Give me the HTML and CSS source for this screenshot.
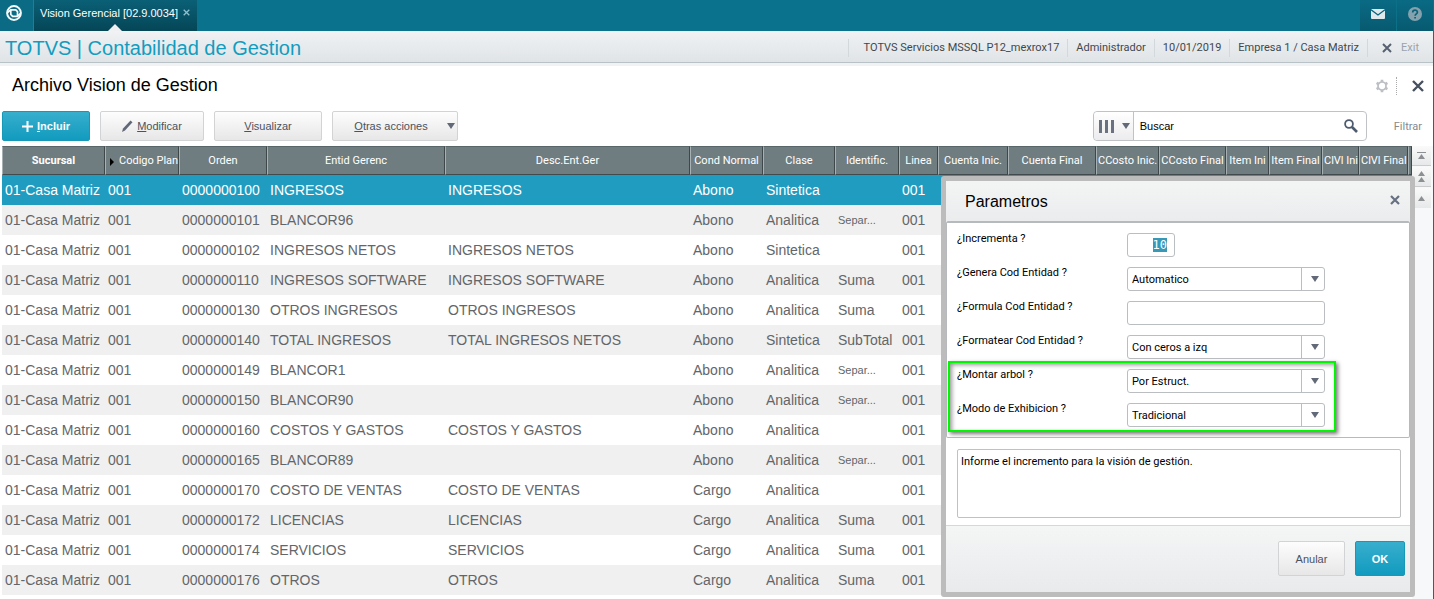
FILE: index.html
```html
<!DOCTYPE html>
<html lang="es">
<head>
<meta charset="utf-8">
<title>TOTVS | Contabilidad de Gestion</title>
<link rel="stylesheet" href="styles.css">
</head>
<body>
<header class="topbar">
  <a class="brand" href="#" aria-label="TOTVS">
    <svg width="16" height="16" viewBox="0 0 16 16"><circle cx="8" cy="8" r="6.900" fill="none" stroke="#f4fafb" stroke-width="2"/><path d="M4.800 4.800h5l1.700 1.800v4.700H6.600L4.800 9.400z" fill="none" stroke="#f4fafb" stroke-width="1.700" stroke-linejoin="round"/><path d="M1.500 7.500l3.300-2.600M11.400 11.200l3.200-2.700" stroke="#f4fafb" stroke-width="1.800"/></svg>
  </a>
  <div class="tab"><span>Vision Gerencial [02.9.0034]</span><button class="plain" aria-label="Cerrar pestaña"><svg width="7" height="7" viewBox="0 0 7 7"><path d="M.7.700l5.600 5.600M6.300.700L.7 6.300" stroke="#8fc0cd" stroke-width="1.300"/></svg></button></div>
  <nav class="top-actions">
    <button class="plain" aria-label="Mensajes"><svg width="14" height="10" viewBox="0 0 14 10"><rect width="14" height="10" rx="1" fill="#dfe9ec"/><path d="M0 .800l7 5.200 7-5.200" fill="none" stroke="#07617a" stroke-width="1.300"/></svg></button>
    <button class="plain" aria-label="Ayuda"><svg width="14" height="14" viewBox="0 0 14 14"><circle cx="7" cy="7" r="7" fill="#84a2ad"/><path d="M4.700 5.400c0-3 4.700-3 4.700-.2 0 1.700-2.300 1.600-2.300 3.600M7.100 9.900v1.700" fill="none" stroke="#0a6178" stroke-width="1.700"/></svg></button>
  </nav>
</header>
<div class="frame">
  <div class="module-bar">
    <h1>TOTVS | Contabilidad de Gestion</h1>
    <ul class="session">
      <li>TOTVS Servicios MSSQL P12_mexrox17</li><li>Administrador</li><li>10/01/2019</li><li>Empresa 1 / Casa Matriz</li>
      <li><button class="plain exit"><svg width="10" height="10" viewBox="0 0 10 10"><path d="M1 1l8 8M9 1L1 9" stroke="#566070" stroke-width="2"/></svg>Exit</button></li>
    </ul>
  </div>
  <div class="title-row">
    <h2>Archivo Vision de Gestion</h2>
    <button class="plain gear" aria-label="Configurar"><svg width="14" height="14" viewBox="0 0 14 14"><circle cx="7" cy="7" r="4" fill="none" stroke="#bcbfc3" stroke-width="1.700"/><path d="M7 .800v2.400M7 10.800v2.400M1.600 3.900l2.100 1.200M10.300 8.900l2.100 1.200M1.600 10.100l2.100-1.200M10.300 5.100l2.100-1.200" stroke="#bcbfc3" stroke-width="2.600"/></svg></button>
    <button class="plain close" aria-label="Cerrar"><svg width="12" height="12" viewBox="0 0 12 12"><path d="M1 1l10 10M11 1L1 11" stroke="#47505f" stroke-width="2.400"/></svg></button>
  </div>
  <div class="toolbar">
    <button class="btn primary add"><svg width="11" height="11" viewBox="0 0 11 11"><path d="M5.500 0v11M0 5.500h11" stroke="#fff" stroke-width="2"/></svg><span><u>I</u>ncluir</span></button>
    <button class="btn edit"><svg width="11" height="12" viewBox="0 0 11 12"><path d="M0 12l1-3.500L8.500.500l2 1.700L3 10.500z" fill="#606878"/></svg><span><u>M</u>odificar</span></button>
    <button class="btn view"><span><u>V</u>isualizar</span></button>
    <button class="btn more"><span><u>O</u>tras acciones</span><i class="down"></i></button>
    <div class="search">
      <button class="pick" aria-label="Elegir columna"><svg width="15" height="13" viewBox="0 0 15 13"><path d="M0 0h3v13H0zM6 0h3v13H6zM12 0h3v13h-3z" fill="#6a7180"/></svg><i class="down"></i></button>
      <input type="text" value="Buscar" aria-label="Buscar">
      <button class="plain" aria-label="Ejecutar busqueda"><svg width="14" height="14" viewBox="0 0 14 14"><circle cx="5" cy="5" r="3.900" fill="none" stroke="#4e5a6d" stroke-width="1.800"/><path d="M8 8l5 5" stroke="#4e5a6d" stroke-width="2.600"/></svg></button>
    </div>
    <a class="filter" href="#">Filtrar</a>
  </div>
  <main class="browse">
    <table class="grid">
      <colgroup><col class="w103"><col class="w74"><col class="w88"><col class="w178"><col class="w245"><col class="w73"><col class="w72"><col class="w64"><col class="w39"><col class="w70"><col class="w88"><col class="w63"><col class="w67"><col class="w43"><col class="w53"><col class="w37"><col class="w49"><col></colgroup>
      <thead><tr><th class="sorted">Sucursal</th><th class="marked"><span class="mark"></span>Codigo Plan</th><th>Orden</th><th>Entid Gerenc</th><th>Desc.Ent.Ger</th><th>Cond Normal</th><th>Clase</th><th>Identific.</th><th>Linea</th><th>Cuenta Inic.</th><th>Cuenta Final</th><th>CCosto Inic.</th><th>CCosto Final</th><th>Item Ini</th><th>Item Final</th><th>ClVl Ini</th><th>ClVl Final</th><th></th></tr></thead>
      <tbody id="rows"></tbody>
    </table>
    <div class="scroller">
      <button aria-label="Inicio"><svg width="9" height="8" viewBox="0 0 9 8"><path d="M0 0h9v1H0zM4.500 2L8 7H1z" fill="#8d9093"/></svg></button>
      <button aria-label="Pagina anterior"><svg width="9" height="11" viewBox="0 0 9 11"><path d="M4.500 0L8 5H1zM4.500 6L8 11H1z" fill="#8d9093"/></svg></button>
      <button aria-label="Anterior"><svg width="9" height="5" viewBox="0 0 9 5"><path d="M4.500 0L8 5H1z" fill="#8d9093"/></svg></button>
    </div>
    <section class="dialog" role="dialog" aria-labelledby="dlg-title">
      <div class="dialog-head"><h3 id="dlg-title">Parametros</h3><button class="plain" aria-label="Cerrar"><svg width="10" height="10" viewBox="0 0 10 10"><path d="M1 1l8 8M9 1L1 9" stroke="#667080" stroke-width="2.200"/></svg></button></div>
      <form class="params">
        <div class="field"><label for="p1">¿Incrementa ?</label><input class="num" id="p1" type="text" value="10"></div>
        <div class="field"><label for="p2">¿Genera Cod Entidad ?</label><span class="select"><select id="p2"><option>Automatico</option></select></span></div>
        <div class="field"><label for="p3">¿Formula Cod Entidad ?</label><input id="p3" type="text"></div>
        <div class="field"><label for="p4">¿Formatear Cod Entidad ?</label><span class="select"><select id="p4"><option>Con ceros a izq</option></select></span></div>
        <div class="highlight">
          <div class="field"><label for="p5">¿Montar arbol ?</label><span class="select"><select id="p5"><option>Por Estruct.</option></select></span></div>
          <div class="field"><label for="p6">¿Modo de Exhibicion ?</label><span class="select"><select id="p6"><option>Tradicional</option></select></span></div>
        </div>
      </form>
      <div class="hint"><textarea readonly aria-label="Ayuda del parametro">Informe el incremento para la visión de gestión.</textarea></div>
      <div class="dialog-foot"><button class="btn cancel">Anular</button><button class="btn primary ok">OK</button></div>
    </section>
  </main>
</div>
<script src="app.js"></script>
</body>
</html>
```
FILE: styles.css
```css
* { box-sizing: border-box; }
body { margin: 0; height: 100vh; overflow: hidden; display: flex; flex-direction: column; background: #fff; color: #000; font-family: "Liberation Sans", Arial, sans-serif; font-size: 11px; }
h1, h2, h3 { margin: 0; font-weight: normal; }
button, input, select, textarea { font: inherit; }
svg { display: block; flex: none; }
.plain { border: 0; background: none; padding: 0; color: inherit; display: flex; align-items: center; justify-content: center; }

.topbar { flex: none; display: flex; height: 31px; background: #0b728e; color: #fff; }
.brand { width: 34px; display: flex; padding: 5px 0 0 6px; background: #0b6a84; border-right: 1px solid #35778a; }
.tab { position: relative; width: 163px; display: flex; gap: 5px; padding: 6px 0 0 6px; line-height: 14px; background: linear-gradient(#0a6076, #054657); white-space: nowrap; }
.tab .plain { height: 13px; }
.tab::after { content: ""; position: absolute; bottom: 0; left: 74px; border: 7px solid transparent; border-top: 0; border-bottom-color: #eef0f2; }
.top-actions { margin-left: auto; display: flex; background: linear-gradient(#0a6a84, #075a70); }
.top-actions .plain { width: 37px; padding-bottom: 4px; border-right: 1px solid #0c7088; }

.frame { flex: 1; min-height: 0; display: flex; flex-direction: column; border-right: 1px solid #0b728e; }
.module-bar { flex: none; display: flex; align-items: center; height: 35px; padding: 0 14px 0 5px; background: linear-gradient(#f0f2f3, #dfe4e7 31px, #b9c2c6 31px, #b9c2c6 32px, #f1f2f3 32px); }
.module-bar h1 { font-size: 20px; line-height: 20px; padding-bottom: 2px; color: #129cbf; white-space: nowrap; }
.session { display: flex; margin: 0 0 2px auto; padding: 0; list-style: none; color: #41474d; line-height: 18px; white-space: nowrap; font-family: Roboto, sans-serif; }
.session li { padding: 0 8px; border-left: 1px solid #d3d8db; }
.session li:first-child { padding-left: 15px; }
.session li:last-child { padding: 0 0 0 14px; }
.exit { gap: 9px; height: 18px; color: #9aa2ad; }
.title-row { flex: none; display: flex; align-items: center; height: 45px; padding: 0 9px 6px 12px; }
.title-row h2 { font-size: 18px; margin-right: auto; }
.gear { height: 18px; padding-right: 7px; border-right: 1px dotted #aaa; }
.close { margin-left: 15px; }

.toolbar { flex: none; display: flex; align-items: center; gap: 10px; height: 35px; padding: 0 11px 5px 2px; }
.btn { display: flex; align-items: center; justify-content: center; gap: 4px; height: 30px; padding: 0; border: 1px solid #d1d3d5; border-radius: 2px; background: linear-gradient(#fdfdfd, #e7e7e8); color: #4b5260; }
.primary { border-color: #1698b9; background: linear-gradient(#38aecd, #119bbf); color: #fff; font-weight: bold; }
.down { border: 4px solid transparent; border-top: 6px solid #626a78; border-bottom: 0; }
.add { width: 88px; }
.edit { width: 104px; }
.view { width: 108px; }
.more { width: 126px; gap: 19px; padding-left: 19px; }
.search { display: flex; width: 274px; height: 30px; margin-left: auto; border: 1px solid #bfc3c6; border-radius: 4px; }
.pick { display: flex; align-items: center; gap: 8px; width: 40px; padding: 0 0 0 5px; border: 0; border-right: 1px solid #bfc3c6; border-radius: 4px 0 0 4px; background: linear-gradient(#fff, #ececee); }
.search input { flex: 1; min-width: 0; border: 0; padding: 0 6px; background: none; }
.search .plain { width: 30px; }
.filter { margin-left: 17px; color: #858a91; text-decoration: none; font-family: Roboto, sans-serif; }

.browse { position: relative; flex: 1; min-height: 0; display: flex; align-items: stretch; padding-left: 2px; }
.grid { flex: 1; align-self: flex-start; min-width: 0; width: 0; table-layout: fixed; border-collapse: separate; border-spacing: 0; color: #636669; }
.grid th { height: 29px; padding: 0 1px; background: #6f7d80; color: #fff; font: 11px Roboto, sans-serif; white-space: nowrap; overflow: hidden; border-top: 1px solid #58666a; border-bottom: 1px solid #414b4e; border-left: 1px solid #a7b0b2; border-right: 1px solid #3e484b; }
.grid .sorted { font-weight: bold; }
.grid .marked { padding: 0 0 0 4px; text-align: left; }
.mark { display: inline-block; margin-right: 5px; border: 4px solid transparent; border-right: 0; border-left-color: #000; vertical-align: -2px; }
.grid td { height: 30px; padding: 0 0 0 3px; font-size: 14px; white-space: nowrap; overflow: hidden; }
.grid tr:nth-child(odd) td { background: #fff; }
.grid tr:nth-child(even) td { background: #f0f0f0; }
.grid tr.current td { background: #1f9cbf; color: #fff; }
.grid td.small { font-size: 11px; }
.w103 { width: 103px; } .w74 { width: 74px; } .w88 { width: 88px; } .w178 { width: 178px; } .w245 { width: 245px; }
.w73 { width: 73px; } .w72 { width: 72px; } .w64 { width: 64px; } .w39 { width: 39px; } .w70 { width: 70px; }
.w63 { width: 63px; } .w67 { width: 67px; } .w43 { width: 43px; } .w53 { width: 53px; } .w37 { width: 37px; } .w49 { width: 49px; }

.scroller { flex: none; width: 21px; display: flex; flex-direction: column; gap: 1px; background: #f7f8fa; }
.scroller button { display: flex; align-items: center; justify-content: center; width: 19px; height: 20px; padding: 0; border: 0; border-bottom: 1px solid #c9cbcd; background: linear-gradient(#fafafa, #e7e8e9); }
.scroller button:last-child { border-bottom: 0; }

.dialog { position: absolute; top: 30px; right: 18px; width: 474px; border: 5px solid #bcbcbc; border-radius: 3px; background: #fff; }
.dialog-head { display: flex; align-items: center; justify-content: space-between; height: 40px; padding: 0 10px 3px 19px; background: linear-gradient(#f3f5f5, #ebeced); }
.dialog-head h3 { font-size: 16px; line-height: 20px; padding-top: 4px; }
.params { display: flex; flex-direction: column; gap: 10px; height: 217px; padding: 10px 10px 0; border: 1px solid #b7babc; border-top-width: 2px; border-radius: 2px; font-family: Roboto, sans-serif; }
.field { display: grid; grid-template-columns: 170px 198px; height: 24px; }
.field label { line-height: 12px; }
.field input, .field select { width: 100%; height: 24px; padding: 0 4px; border: 1px solid #babec1; border-radius: 3px; background: #fff; color: #000; outline: 0; }
.field .num { width: 48px; padding: 0 7px; text-align: right; font-family: "DejaVu Sans Mono", monospace; font-size: 12px; caret-color: transparent; }
.num::selection { background: #3798b8; color: #fff; }
.select { position: relative; }
.field select { appearance: none; }
.select::before { content: ""; position: absolute; top: 1px; bottom: 1px; right: 23px; width: 1px; background: #babec1; }
.select::after { content: ""; position: absolute; top: 9px; right: 6px; border: 4px solid transparent; border-top: 6px solid #626a78; border-bottom: 0; }
.highlight { position: relative; display: flex; flex-direction: column; gap: 10px; width: 368px; }
.highlight::after { content: ""; position: absolute; inset: -8px -11px -5px -9px; border: 2px solid #00f500; box-shadow: 2px 2px 4px #777, inset 2px 2px 4px #999; pointer-events: none; }
.hint { padding: 11px 9px 7px 11px; }
.hint textarea { display: block; width: 100%; height: 69px; padding: 5px 3px; border: 1px solid #bfc1c3; border-radius: 2px; resize: none; outline: 0; font-family: Roboto, sans-serif; }
.dialog-foot { display: flex; justify-content: flex-end; gap: 10px; height: 67px; padding: 15px 5px 0; border-top: 1px solid #d5d7d9; background: linear-gradient(#f4f5f5, #e9eaec); }
.dialog-foot .btn { height: 35px; }
.cancel { width: 67px; }
.ok { width: 50px; }
```
FILE: app.js
```js
const rows = [
  ["0000000100", "INGRESOS", "INGRESOS", "Abono", "Sintetica", ""],
  ["0000000101", "BLANCOR96", "", "Abono", "Analitica", "Separ..."],
  ["0000000102", "INGRESOS NETOS", "INGRESOS NETOS", "Abono", "Sintetica", ""],
  ["0000000110", "INGRESOS SOFTWARE", "INGRESOS SOFTWARE", "Abono", "Analitica", "Suma"],
  ["0000000130", "OTROS INGRESOS", "OTROS INGRESOS", "Abono", "Analitica", "Suma"],
  ["0000000140", "TOTAL INGRESOS", "TOTAL INGRESOS NETOS", "Abono", "Sintetica", "SubTotal"],
  ["0000000149", "BLANCOR1", "", "Abono", "Analitica", "Separ..."],
  ["0000000150", "BLANCOR90", "", "Abono", "Analitica", "Separ..."],
  ["0000000160", "COSTOS Y GASTOS", "COSTOS Y GASTOS", "Abono", "Analitica", ""],
  ["0000000165", "BLANCOR89", "", "Abono", "Analitica", "Separ..."],
  ["0000000170", "COSTO DE VENTAS", "COSTO DE VENTAS", "Cargo", "Analitica", ""],
  ["0000000172", "LICENCIAS", "LICENCIAS", "Cargo", "Analitica", "Suma"],
  ["0000000174", "SERVICIOS", "SERVICIOS", "Cargo", "Analitica", "Suma"],
  ["0000000176", "OTROS", "OTROS", "Cargo", "Analitica", "Suma"]
];
const body = document.getElementById("rows");
rows.forEach((row, index) => {
  const tr = body.insertRow();
  if (index === 0) tr.className = "current";
  const cells = ["01-Casa Matriz", "001", ...row, "001", ...Array(9).fill("")];
  cells.forEach(text => {
    const td = tr.insertCell();
    td.textContent = text;
    if (text === "Separ...") td.className = "small";
  });
});
document.getElementById("p1").select();
```
